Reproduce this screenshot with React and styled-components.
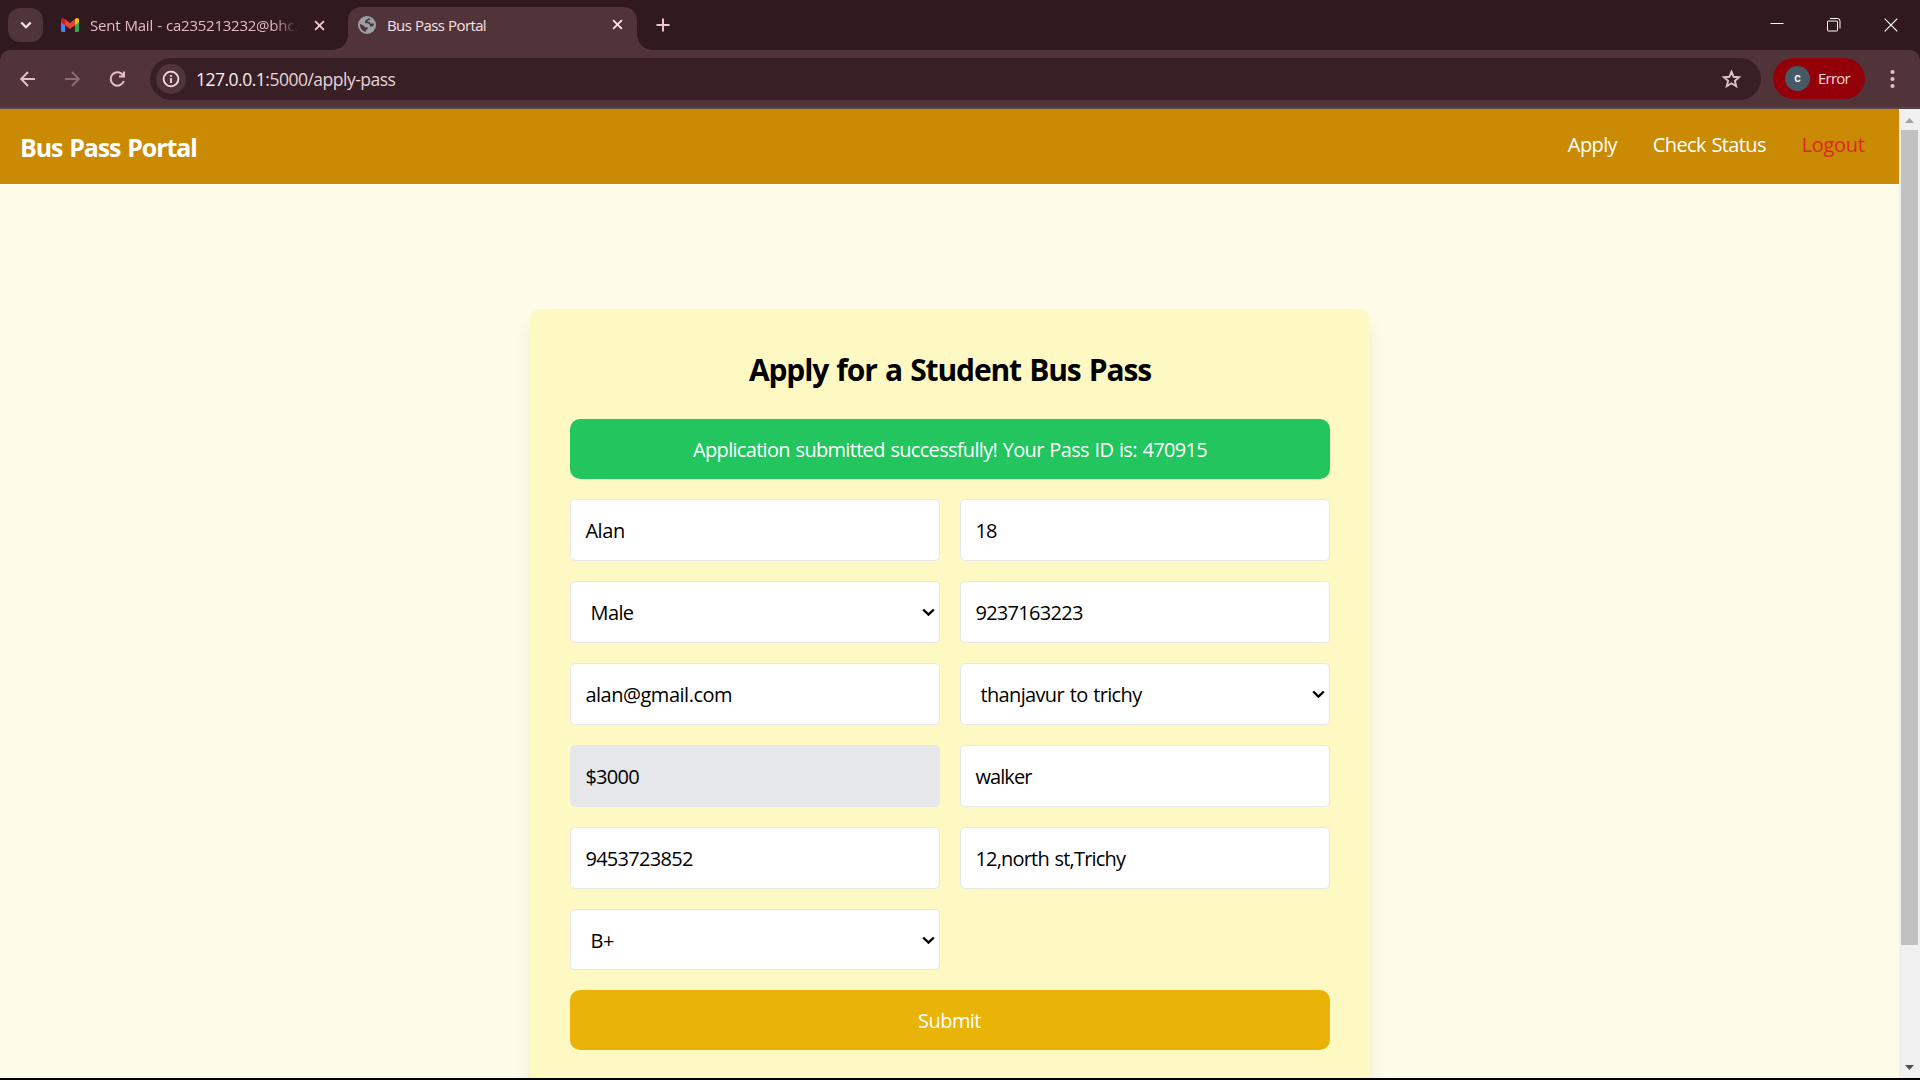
import React from "react";
import styled, { createGlobalStyle } from "styled-components";

const Global = createGlobalStyle`
  *, *::before, *::after { box-sizing: border-box; }
  body {
    margin: 0;
    background: #000;
    overflow: hidden;
    font-family: "Open Sans", "Noto Sans", sans-serif;
  }
  svg { display: block; flex: none; }
`;

const Window = styled.div`
  width: 1920px;
  height: 1080px;
  display: flex;
  flex-direction: column;
  background: #000;
  padding-bottom: 2px;
`;

/* ---------- Browser chrome ---------- */

const TabStrip = styled.div`
  height: 50px;
  flex: none;
  display: flex;
  align-items: center;
  padding-left: 8px;
  background: #30191f;
`;

const TabSearch = styled.button`
  width: 35px;
  height: 34px;
  padding: 0;
  border: 0;
  border-radius: 12px;
  background: #4f343a;
  display: flex;
  align-items: center;
  justify-content: center;
`;

const Tab = styled.div`
  display: flex;
  align-items: center;
  width: 305px;
  height: 50px;
  padding-left: 18px;
  color: #e6bac2;
`;

const ActiveTab = styled(Tab)`
  position: relative;
  align-self: flex-end;
  width: 289px;
  height: 43px;
  padding: 0 0 8px 10px;
  color: #f7e0e3;
  background: #50343a;
  border-radius: 13px 13px 0 0;

  &::before,
  &::after {
    content: "";
    position: absolute;
    bottom: 0;
    width: 15px;
    height: 15px;
  }
  &::before {
    left: -15px;
    background: radial-gradient(circle at 0 0, transparent 14.5px, #50343a 15px);
  }
  &::after {
    right: -15px;
    background: radial-gradient(circle at 100% 0, transparent 14.5px, #50343a 15px);
  }
`;

const TabTitle = styled.span`
  width: ${(p) => p.$width}px;
  margin: 0 ${(p) => p.$gap}px 0 11px;
  overflow: hidden;
  white-space: nowrap;
  font-size: 15px;
  line-height: 20px;
  letter-spacing: ${(p) => p.$spacing}px;
  word-spacing: 0.6px;
  ${(p) => p.$fade && "mask-image: linear-gradient(90deg, #000 calc(100% - 28px), transparent);"}
`;

const NewTab = styled.div`
  margin-left: 18px;
`;

const WindowControls = styled.div`
  margin-left: auto;
  display: flex;
  gap: 43px;
  padding-right: 22px;
`;

const ToolbarBack = styled.div`
  flex: none;
  height: 59px;
  background: #30191f;
`;

const Toolbar = styled.div`
  height: 59px;
  display: flex;
  align-items: center;
  padding: 0 17px 0 18px;
  background: #50343a;
  border-bottom: 2px solid #57444b;
  border-radius: 10px 10px 0 0;
`;

const NavButtons = styled.div`
  display: flex;
  gap: 25px;
  width: 132px;
`;

const AddressBar = styled.div`
  flex: none;
  width: 1611px;
  height: 42px;
  display: flex;
  align-items: center;
  padding: 0 19px 0 6px;
  border-radius: 21px;
  background: #381f26;
`;

const SiteInfo = styled.div`
  width: 30px;
  height: 30px;
  border-radius: 50%;
  background: #50343a;
  display: flex;
  align-items: center;
  justify-content: center;
`;

const Url = styled.span`
  flex: 1;
  margin-left: 10px;
  padding-top: 1px;
  font-size: 17.5px;
  line-height: 24px;
  letter-spacing: -0.5px;
  color: #e4d3d5;

  b { font-weight: 400; color: #fbeef0; }
`;

const ProfilePill = styled.div`
  width: 92px;
  height: 41px;
  margin-left: 12px;
  padding-left: 12px;
  display: flex;
  align-items: center;
  border-radius: 21px;
  background: #93000a;
  color: #ffdad6;
  font-size: 15px;
  line-height: 20px;
  letter-spacing: -0.75px;
`;

const ProfileLabel = styled.span`
  padding-bottom: 2px;
`;

const Avatar = styled.span`
  width: 25px;
  height: 25px;
  margin-right: 8px;
  border-radius: 50%;
  background: #455a64;
  color: #fff;
  font: 500 12.5px/24px Roboto, sans-serif;
  letter-spacing: 0;
  text-align: center;
`;

const Kebab = styled.div`
  margin-left: auto;
`;

/* ---------- Page ---------- */

const Viewport = styled.div`
  flex: 1;
  min-height: 0;
  display: flex;
`;

const Page = styled.div`
  flex: 1;
  display: flex;
  flex-direction: column;
  overflow: hidden;
  background: #fefce8;
`;

const Header = styled.header`
  flex: none;
  height: 75px;
  padding: 21px 34.5px 19px 20px;
  display: flex;
  justify-content: space-between;
  align-items: flex-start;
  background: #ca8a04;
  color: #fff;
`;

const Brand = styled.h1`
  margin: 0;
  font-size: 25px;
  line-height: 35px;
  font-weight: 700;
  letter-spacing: -1.08px;
  word-spacing: 1.3px;
`;

const Links = styled.nav`
  display: flex;
  gap: 35.8px;
`;

const Link = styled.a`
  font-size: 20px;
  line-height: 30px;
  letter-spacing: ${(p) => p.$spacing}px;
  word-spacing: 1px;
  color: ${(p) => (p.$danger ? "#dc2626" : "#fff")};
`;

const Main = styled.main`
  flex: 1;
  display: flex;
  justify-content: center;
  align-items: flex-start;
  padding: 125px 0 0 1px;
`;

const Card = styled.section`
  width: 840px;
  height: 860px;
  flex: none;
  padding: 40px;
  border-radius: 10px;
  background: #fef9c3;
  box-shadow: 0 12.5px 18.75px -3.75px rgba(0, 0, 0, 0.1), 0 5px 7.5px -5px rgba(0, 0, 0, 0.1);
`;

const Title = styled.h2`
  margin: 0 0 29px;
  padding-top: 1px;
  font-size: 30px;
  line-height: 40px;
  font-weight: 700;
  letter-spacing: -1.12px;
  word-spacing: 1.5px;
  text-align: center;
  color: #000;
`;

const Banner = styled.div`
  padding: 16px 15px 14px;
  margin-bottom: 20px;
  border-radius: 10px;
  background: #22c55e;
  color: #fff;
  font-size: 20px;
  line-height: 30px;
  letter-spacing: -0.69px;
  word-spacing: 1.2px;
  text-align: center;
`;

const Form = styled.div`
  display: grid;
  grid-template-columns: 1fr 1fr;
  gap: 20px;
`;

const Input = styled.input`
  width: 100%;
  height: 62px;
  padding: 0 14.4px;
  border: 1px solid #e5e7eb;
  border-radius: 5px;
  outline: none;
  background: ${(p) => (p.$muted ? "#e5e7eb" : "#fff")};
  color: #000;
  font: 400 20px/30px "Open Sans", "Noto Sans", sans-serif;
  letter-spacing: ${(p) => p.$spacing}px;
  word-spacing: 1.2px;
`;

const SelectBox = styled.div`
  height: ${(p) => p.$height || 62}px;
  display: flex;
  align-items: center;
  justify-content: space-between;
  padding: 2px 4.5px 0 19.5px;
  border: 1px solid #e5e7eb;
  border-radius: 5px;
  background: #fff;
  color: #000;
  font-size: 20px;
  line-height: 30px;
  letter-spacing: ${(p) => p.$spacing}px;
  word-spacing: 1.2px;

  svg { margin-bottom: 1px; }
`;

const Submit = styled.button`
  grid-column: 1 / -1;
  height: 60px;
  padding: 2px 1px 0 0;
  border: 0;
  border-radius: 10px;
  background: #eab308;
  color: #fff;
  font: 400 20px/30px "Open Sans", "Noto Sans", sans-serif;
  letter-spacing: -0.55px;
`;

const Scrollbar = styled.div`
  flex: none;
  width: 21px;
  padding: 9px 0 8px;
  display: flex;
  flex-direction: column;
  align-items: center;
  justify-content: space-between;
  background: #f0f0f0;
`;

const ScrollTop = styled.div`
  display: flex;
  flex-direction: column;
  align-items: center;
  gap: 7px;
`;

const Thumb = styled.div`
  width: 17px;
  height: 815px;
  background: #c1c1c1;
`;

/* ---------- Icons ---------- */

const Cross = ({ color }) => (
  <svg width="11" height="11" viewBox="0 0 12 12" fill="none" stroke={color} strokeWidth="2">
    <path d="M1.2 1.2 10.8 10.8M10.8 1.2 1.2 10.8" />
  </svg>
);

const SelectArrow = () => (
  <svg width="13" height="9" viewBox="0 0 13 9" fill="none" stroke="#000" strokeWidth="2.4">
    <path d="M1.2 1.5 6.5 6.6 11.8 1.5" />
  </svg>
);

const Gmail = () => (
  <svg width="18" height="14" viewBox="0 0 18 14">
    <path d="M0 3h4.1v11H1.3A1.3 1.3 0 0 1 0 12.7z" fill="#4285f4" />
    <path d="M13.9 3H18v9.7a1.3 1.3 0 0 1-1.3 1.3h-2.8z" fill="#34a853" />
    <path d="M13.9 1.3 15 .5c1.4-1 3-.2 3 1.5v2.2l-4.1 3z" fill="#fbbc04" />
    <path d="M4.1 1.3 3 .5C1.6-.5 0 .3 0 2v2.2l4.1 3z" fill="#c5221f" />
    <path d="M4.1 1.3 9 5l4.900-3.700v5.900L9 10.900 4.100 7.200z" fill="#ea4335" />
  </svg>
);

const Globe = () => (
  <svg width="18" height="18" viewBox="0 0 18 18">
    <circle cx="9" cy="9" r="9" fill="#9aa0a6" />
    <g fill="#50343a">
      <path d="M11.600 2.200C10 2.300 8 3.600 7 5.200v2.100h3l2 1.700v1.600h2.400l1.500-1.900v-1.100l-3.300-.2-1.200-1.700H9.500V4.600l2.900-.9z" />
      <path d="M1.900 7.700c-.3 3.900 2.200 7.400 6 8.200v-1.700l1.800-1.100v-1.900H6.900L5.400 9.400z" />
    </g>
  </svg>
);

const fields = [
  { value: "Alan", spacing: -0.44 },
  { value: "18", spacing: -0.9 },
  { value: "Male", spacing: -0.6, select: true },
  { value: "9237163223", spacing: -0.7 },
  { value: "alan@gmail.com", spacing: -0.48 },
  { value: "thanjavur to trichy", spacing: -0.66, select: true },
  { value: "$3000", spacing: -0.75, muted: true },
  { value: "walker", spacing: -0.9 },
  { value: "9453723852", spacing: -0.7 },
  { value: "12,north st,Trichy", spacing: -0.8 },
  { value: "B+", spacing: -0.4, select: true, height: 61 },
];

export default function App() {
  return (
    <Window>
      <Global />
      <TabStrip>
        <TabSearch>
          <svg width="12" height="9" viewBox="0 0 12 9" fill="none" stroke="#fbe3e6" strokeWidth="2.3">
            <path d="M1.3 1.5 6 6.2 10.7 1.5" />
          </svg>
        </TabSearch>
        <Tab>
          <Gmail />
          <TabTitle $width={210} $gap={14} $spacing={-0.24} $fade>Sent Mail - ca235213232@bhc.edu</TabTitle>
          <Cross color="#f0c9cf" />
        </Tab>
        <ActiveTab>
          <Globe />
          <TabTitle $width={213} $gap={12} $spacing={-0.62}>Bus Pass Portal</TabTitle>
          <Cross color="#fbe6e9" />
        </ActiveTab>
        <NewTab>
          <svg width="16" height="14" viewBox="0 0 16 14" stroke="#efc3ca" strokeWidth="2">
            <path d="M1.5 7h13M8 .5v13" />
          </svg>
        </NewTab>
        <WindowControls>
          <svg width="14" height="14" viewBox="0 0 14 14" stroke="#fff">
            <path d="M.5 5.5h13" />
          </svg>
          <svg width="14" height="14" viewBox="0 0 14 14" fill="none" stroke="#fff">
            <rect x=".5" y="3" width="10" height="10" rx=".6" />
            <path d="M3 .5h7.500a2.500 2.500 0 0 1 2.500 2.500V10.500" />
          </svg>
          <svg width="14" height="14" viewBox="0 0 14 14" stroke="#fff" strokeWidth="1.2">
            <path d="M.7.7l12.600 12.600M13.300.7.7 13.300" />
          </svg>
        </WindowControls>
      </TabStrip>

      <ToolbarBack>
        <Toolbar>
          <NavButtons>
            <svg width="20" height="18" viewBox="0 0 20 18" fill="none" stroke="#e8bcc4" strokeWidth="2">
              <path d="M17 9H3.500M10 2 3.200 9 10 16" />
            </svg>
            <svg width="20" height="18" viewBox="0 0 20 18" fill="none" stroke="#8d6a71" strokeWidth="2">
              <path d="M2 9h13.500M9 2l6.800 7L9 16" />
            </svg>
            <svg width="20" height="18" viewBox="0 0 20 18" fill="none" stroke="#e8bcc4" strokeWidth="2">
              <path d="M15.300 5.700A6.700 6.700 0 1 0 15.800 11M16 1.500v5h-5" />
            </svg>
          </NavButtons>
          <AddressBar>
            <SiteInfo>
              <svg width="18" height="18" viewBox="0 0 18 18" fill="none" stroke="#f4dde0" strokeWidth="1.8">
                <circle cx="9" cy="9" r="7.4" />
                <path d="M9 8v5M9 5v1.800" />
              </svg>
            </SiteInfo>
            <Url><b>127.0.0.1</b>:5000/apply-pass</Url>
            <svg width="21" height="20" viewBox="0 0 21 20" fill="none" stroke="#dcc3c8" strokeWidth="1.9">
              <path d="M10.500 2.700l2.100 5.100 5.500.4-4.200 3.600 1.300 5.400-4.700-2.900-4.700 2.900 1.300-5.400-4.200-3.600 5.500-.4z" />
            </svg>
          </AddressBar>
          <ProfilePill>
            <Avatar>c</Avatar>
            <ProfileLabel>Error</ProfileLabel>
          </ProfilePill>
          <Kebab>
            <svg width="21" height="20" viewBox="0 0 21 20" fill="#e8bcc4">
              <circle cx="10.500" cy="3" r="2.100" />
              <circle cx="10.500" cy="10" r="2.100" />
              <circle cx="10.500" cy="17" r="2.100" />
            </svg>
          </Kebab>
        </Toolbar>
      </ToolbarBack>

      <Viewport>
        <Page>
          <Header>
            <Brand>Bus Pass Portal</Brand>
            <Links>
              <Link $spacing={-0.6}>Apply</Link>
              <Link $spacing={-0.62}>Check Status</Link>
              <Link $spacing={-0.33} $danger>Logout</Link>
            </Links>
          </Header>
          <Main>
            <Card>
              <Title>Apply for a Student Bus Pass</Title>
              <Banner>Application submitted successfully! Your Pass ID is: 470915</Banner>
              <Form>
                {fields.map((f) =>
                  f.select ? (
                    <SelectBox key={f.value} $spacing={f.spacing} $height={f.height}>
                      {f.value}
                      <SelectArrow />
                    </SelectBox>
                  ) : (
                    <Input key={f.value} readOnly value={f.value} $spacing={f.spacing} $muted={f.muted} />
                  )
                )}
                <Submit>Submit</Submit>
              </Form>
            </Card>
          </Main>
        </Page>
        <Scrollbar>
          <ScrollTop>
            <svg width="9" height="5" viewBox="0 0 9 5" fill="#a3a3a3">
              <path d="M0 5 4.500 0 9 5z" />
            </svg>
            <Thumb />
          </ScrollTop>
          <svg width="9" height="5" viewBox="0 0 9 5" fill="#505050">
            <path d="M0 0h9L4.500 5z" />
          </svg>
        </Scrollbar>
      </Viewport>
    </Window>
  );
}
